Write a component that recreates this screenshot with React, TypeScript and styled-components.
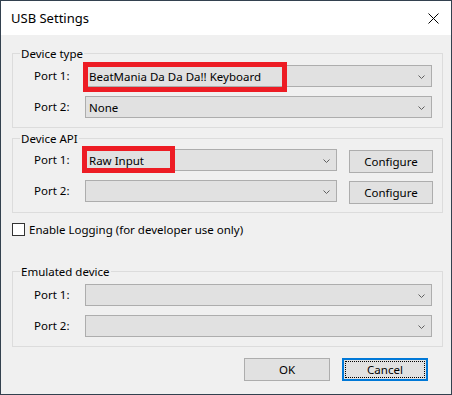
import React from 'react';
import styled, { createGlobalStyle } from 'styled-components';

const Global = createGlobalStyle`
  html, body { margin: 0; padding: 0; background: #ffffff; }
  * { box-sizing: border-box; }
  #root { width: 452px; height: 395px; }
`;

const Window = styled.div`
  width: 452px;
  height: 395px;
  border: 1px solid #33414f;
  background: #f0f0f0;
  display: flex;
  flex-direction: column;
  overflow: hidden;
  font-family: "Noto Sans", "Open Sans", sans-serif;
  font-size: 11.5px;
  color: #000;
`;

const TitleBar = styled.div`
  flex: none;
  height: 34px;
  background: #ffffff;
  display: flex;
  align-items: center;
  justify-content: space-between;
  padding: 0 12px 0 10px;
`;

const Title = styled.span`
  font-size: 13px;
  line-height: 18px;
`;

const CloseIcon = styled.svg`
  display: block;
  width: 11px;
  height: 11px;
`;

const Body = styled.div`
  flex: 1;
  display: flex;
  flex-direction: column;
  padding: 11px 8px 0 11px;
`;

const Group = styled.fieldset<{ $mt: number; $pt: number; $pb: number; $gap: number }>`
  margin: ${(p) => p.$mt}px 0 0 0;
  padding: ${(p) => p.$pt}px 0 ${(p) => p.$pb}px 0;
  border: 1px solid #dcdcdc;
  min-width: 0;
  display: flex;
  flex-direction: column;
  gap: ${(p) => p.$gap}px;
`;

const Legend = styled.legend`
  margin-left: 7px;
  padding: 0 1px;
  height: 15px;
  line-height: 15px;
`;

const Row = styled.div<{ $cols: string; $pr: number }>`
  display: grid;
  grid-template-columns: ${(p) => p.$cols};
  align-items: start;
  padding-right: ${(p) => p.$pr}px;
`;

const Label = styled.span`
  padding-left: 21px;
  height: 22px;
  line-height: 22px;
  white-space: nowrap;
`;

const Combo = styled.div`
  position: relative;
  height: 22px;
  border: 1px solid #adadad;
  background: #e1e1e1;
  display: flex;
  align-items: center;
  justify-content: space-between;
  padding: 0 6px 0 3px;
  white-space: nowrap;
`;

const Chevron = styled.svg`
  display: block;
  width: 7px;
  height: 4px;
  margin-top: 2px;
  flex: none;
`;

const Highlight = styled.span`
  position: absolute;
  border: 5px solid #ed1c24;
  pointer-events: none;
`;

const Button = styled.button<{ $w: number; $mt?: number }>`
  width: ${(p) => p.$w}px;
  height: 23px;
  margin-top: ${(p) => p.$mt ?? 0}px;
  justify-self: end;
  border: 1px solid #adadad;
  background: #e1e1e1;
  font: inherit;
  color: #000;
  padding: 0;
  display: flex;
  align-items: center;
  justify-content: center;
`;

const DefaultButton = styled(Button)`
  border: 2px solid #0078d7;
  padding: 1px;
`;

const FocusRing = styled.span`
  flex: 1;
  align-self: stretch;
  border: 1px dotted #000;
  display: flex;
  align-items: center;
  justify-content: center;
`;

const CheckRow = styled.label`
  margin-top: 10px;
  height: 13px;
  display: flex;
  align-items: center;
  gap: 4px;
  white-space: nowrap;
`;

const CheckBox = styled.span`
  width: 13px;
  height: 13px;
  border: 1px solid #333;
  background: #fff;
  flex: none;
`;

const ButtonRow = styled.div`
  margin-top: 11px;
  display: flex;
  justify-content: flex-end;
  gap: 12px;
  padding-right: 15px;
`;

type Box = { l: number; t: number; w: number; h: number };

function ComboBox({ value, box }: { value?: string; box?: Box }) {
  return (
    <Combo>
      <span>{value ?? ''}</span>
      <Chevron viewBox="0 0 7 4">
        <polyline points="0.5,0.5 3.5,3.5 6.5,0.5" fill="none" stroke="#606060" strokeWidth="1" />
      </Chevron>
      {box && (
        <Highlight
          style={{ left: box.l, top: box.t, width: box.w, height: box.h }}
        />
      )}
    </Combo>
  );
}

const TWO = '72px 1fr';
const THREE = '72px 1fr 96px';

export default function App() {
  return (
    <>
      <Global />
      <Window>
        <TitleBar>
          <Title>USB Settings</Title>
          <CloseIcon viewBox="0 0 11 11">
            <path d="M0.5 0.5 L10.5 10.5 M10.5 0.5 L0.5 10.5" stroke="#000" strokeWidth="1" fill="none" />
          </CloseIcon>
        </TitleBar>
        <Body>
          <Group $mt={0} $pt={4} $pb={9} $gap={9}>
            <Legend>Device type</Legend>
            <Row $cols={TWO} $pr={10}>
              <Label>Port 1:</Label>
              <ComboBox value="BeatMania Da Da Da!! Keyboard" box={{ l: -3, t: -4, w: 204, h: 30 }} />
            </Row>
            <Row $cols={TWO} $pr={10}>
              <Label>Port 2:</Label>
              <ComboBox value="None" />
            </Row>
          </Group>

          <Group $mt={3} $pt={3} $pb={8} $gap={7}>
            <Legend>Device API</Legend>
            <Row $cols={THREE} $pr={9}>
              <Label>Port 1:</Label>
              <ComboBox value="Raw Input" box={{ l: -4, t: -4, w: 93, h: 27 }} />
              <Button $w={84} $mt={1}>Configure</Button>
            </Row>
            <Row $cols={THREE} $pr={9}>
              <Label>Port 2:</Label>
              <ComboBox />
              <Button $w={84} $mt={1}>Configure</Button>
            </Row>
          </Group>

          <CheckRow>
            <CheckBox />
            <span>Enable Logging (for developer use only)</span>
          </CheckRow>

          <Group $mt={28} $pt={5} $pb={9} $gap={9}>
            <Legend>Emulated device</Legend>
            <Row $cols={TWO} $pr={10}>
              <Label>Port 1:</Label>
              <ComboBox />
            </Row>
            <Row $cols={TWO} $pr={10}>
              <Label>Port 2:</Label>
              <ComboBox />
            </Row>
          </Group>

          <ButtonRow>
            <Button $w={86}>OK</Button>
            <DefaultButton $w={86}>
              <FocusRing>Cancel</FocusRing>
            </DefaultButton>
          </ButtonRow>
        </Body>
      </Window>
    </>
  );
}
